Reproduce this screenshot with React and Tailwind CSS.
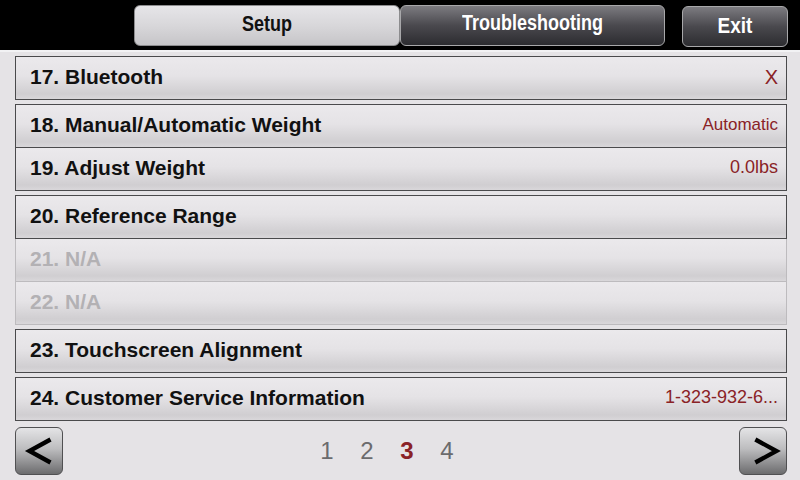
const rowBg = 'bg-[linear-gradient(to_bottom,#ebe9ec_0%,#e5e3e6_45%,#d0ced1_88%,#d9d7da_100%)]'

const groups = [
  [{ label: '17. Bluetooth', value: 'X', size: 'text-[20px] font-light' }],
  [
    { label: '18. Manual/Automatic Weight', value: 'Automatic', size: 'text-[17px]' },
    { label: '19. Adjust Weight', value: '0.0lbs', size: 'text-[18px]' },
  ],
  [
    { label: '20. Reference Range' },
    { label: '21. N/A', disabled: true },
    { label: '22. N/A', disabled: true },
  ],
  [{ label: '23. Touchscreen Alignment' }],
  [{ label: '24. Customer Service Information', value: '1-323-932-6...', size: 'text-[18px]' }],
]

function Row({ label, value, disabled, size, first }) {
  return (
    <div
      className={`flex items-center justify-between pl-[14px] pr-[8px] pb-[3px] border-x border-b ${first ? 'h-[44px] border-t' : 'h-[43px]'} ${
        disabled ? 'border-[#bdbbbe] text-[#b3b1b4]' : 'border-[#4a4a4c] text-[#111]'
      } ${rowBg}`}
    >
      <span className="text-[21px] font-bold">{label}</span>
      {value && <span className={`text-[#8a2226] ${size}`}>{value}</span>}
    </div>
  )
}

function Arrow({ dir }) {
  const pts = dir === 'left' ? '36,12 14,24 36,36' : '16,12 38,24 16,36'
  return (
    <button className="w-[48px] h-[48px] rounded-[6px] border border-[#505052] bg-[linear-gradient(to_bottom,#e4e4e6_0%,#bdbdbf_45%,#6c6c6e_100%)] flex items-center justify-center">
      <svg width="48" height="48" viewBox="0 0 48 48">
        <polyline points={pts} fill="none" stroke="#000" strokeWidth="4.5" strokeLinejoin="miter" />
      </svg>
    </button>
  )
}

export default function App() {
  return (
    <div className="w-[800px] h-[480px] overflow-hidden bg-[#e5e3e6] flex flex-col [font-family:'Liberation_Sans',Arial,sans-serif]">
      <div className="h-[52px] shrink-0 bg-black flex items-start pt-[5px] border-b-2 border-[#f2f2f4]">
        <div className="ml-[134px] w-[266px] h-[41px] rounded-[6px] border border-[#8c8c8e] bg-[linear-gradient(to_bottom,#e6e5e8,#d8d7da_50%,#c6c5c8)] flex items-center justify-center pb-[2px]">
          <span className="inline-block text-[18px] font-bold text-[#111] scale-y-[1.2]">Setup</span>
        </div>
        <div className="w-[265px] h-[41px] rounded-[6px] border border-[#a8a8aa] bg-[linear-gradient(to_bottom,#7c7b80,#4a494e_50%,#2c2c30)] flex items-center justify-center pb-[4px]">
          <span className="inline-block text-[18px] font-bold text-white scale-y-[1.2]">Troubleshooting</span>
        </div>
        <div className="ml-[17px] mt-[1px] w-[106px] h-[41px] rounded-[6px] border border-[#a8a8aa] bg-[linear-gradient(to_bottom,#7c7b80,#4a494e_50%,#2c2c30)] flex items-center justify-center">
          <span className="inline-block text-[19px] font-bold text-white scale-y-[1.15]">Exit</span>
        </div>
      </div>

      <div className="flex flex-col gap-[4px] pt-[4px] pl-[15px] pr-[13px]">
        {groups.map((g, gi) => (
          <div key={gi} className="flex flex-col">
            {g.map((r, ri) => (
              <Row key={ri} {...r} first={ri === 0} />
            ))}
          </div>
        ))}
      </div>

      <div className="flex items-center pl-[15px] pr-[13px] mt-[6px]">
        <Arrow dir="left" />
        <div className="flex ml-[244px] text-[24px] text-[#6b6b6d]">
          <span className="w-[40px] text-center">1</span>
          <span className="w-[40px] text-center">2</span>
          <span className="w-[40px] text-center font-bold text-[#8a2226]">3</span>
          <span className="w-[40px] text-center">4</span>
        </div>
        <div className="flex-1" />
        <Arrow dir="right" />
      </div>
    </div>
  )
}
